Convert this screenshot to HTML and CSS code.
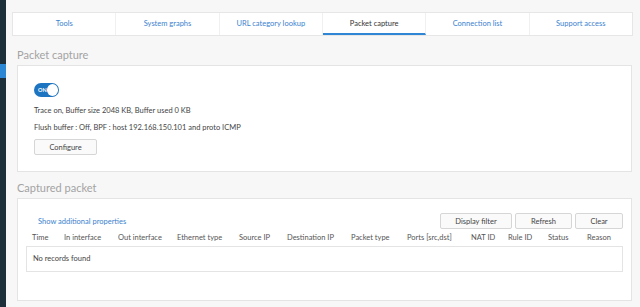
FILE: index.html
```html
<!DOCTYPE html>
<html lang="en">
<head>
    <meta charset="UTF-8" />
    <title>Packet capture</title>
    <link rel="stylesheet" href="styles.css">
</head>
<body>

    <div class="sidebar">
        <div class="sidebar-mark"></div>
    </div>

    <div class="main">
        <div class="tabs">
            <a class="tab">Tools</a>
            <a class="tab">System graphs</a>
            <a class="tab">URL category lookup</a>
            <a class="tab active">Packet capture</a>
            <a class="tab">Connection list</a>
            <a class="tab last">Support access</a>
        </div>

        <div class="section">
            <h2>Packet capture</h2>
            <div class="panel capture">
                <div class="toggle">
                    <span class="toggle-label">ON</span>
                    <span class="toggle-knob"></span>
                </div>
                <p>Trace on, Buffer size 2048 KB, Buffer used 0 KB</p>
                <p>Flush buffer : Off, BPF : host 192.168.150.101 and proto ICMP</p>
                <button class="btn configure">Configure</button>
            </div>
        </div>

        <div class="section second">
            <h2>Captured packet</h2>
            <div class="panel packets">
                <div class="toolbar">
                    <a class="link">Show additional properties</a>
                    <div class="toolbar-buttons">
                        <button class="btn filter">Display filter</button>
                        <button class="btn refresh">Refresh</button>
                        <button class="btn clear">Clear</button>
                    </div>
                </div>
                <div class="columns">
                    <span class="c-time">Time</span>
                    <span class="c-in">In interface</span>
                    <span class="c-out">Out interface</span>
                    <span class="c-eth">Ethernet type</span>
                    <span class="c-src">Source IP</span>
                    <span class="c-dst">Destination IP</span>
                    <span class="c-type">Packet type</span>
                    <span class="c-ports">Ports [src,dst]</span>
                    <span class="c-nat">NAT ID</span>
                    <span class="c-rule">Rule ID</span>
                    <span class="c-status">Status</span>
                    <span class="c-reason">Reason</span>
                </div>
                <div class="empty">No records found</div>
            </div>
        </div>
    </div>

</body>
</html>
```

FILE: styles.css
```css
body {
    font-family: Lato, "Liberation Sans", sans-serif;
    margin: 0;
    padding: 0;
    background-color: #f7f7f7;
    color: #444;
    display: flex;
    min-height: 307px;
    font-size: 7.5px;
}
.sidebar {
    width: 6px;
    background-color: #1c2f3b;
}
.sidebar-mark {
    margin-top: 64px;
    height: 14px;
    background-color: #2b87d3;
}
.main {
    flex: 1;
    padding: 12px 7px 0 6px;
    border-top: 2px solid #fff;
    margin-top: -2px;
}
.tabs {
    display: flex;
    background: #fff;
    border: 1px solid #e6e6e6;
    height: 22px;
}
.tab {
    flex: 1;
    text-align: center;
    line-height: 22px;
    color: #3b82cf;
    border-right: 1px solid #f0f0f0;
    box-sizing: border-box;
}
.tab.last {
    border-right: none;
}
.tab.active {
    color: #333;
    border-bottom: 2px solid #2f86d4;
}
.section {
    margin: 0 1px 0 5px;
}
.section h2 {
    font-size: 11px;
    font-weight: normal;
    color: #a3a3a3;
    margin: 12px 0 4px;
    line-height: 13px;
}
.section.second h2 {
    margin-top: 9px;
}
.panel {
    background: #fff;
    border: 1px solid #e4e4e4;
}
.capture {
    padding: 17px 16px 16px;
}
.capture p {
    margin: 0;
    line-height: 17px;
}
.toggle {
    width: 25px;
    height: 14px;
    border-radius: 7px;
    background: #1d74c0;
    display: flex;
    align-items: center;
    justify-content: space-between;
    padding: 0 1px 0 4px;
    box-sizing: border-box;
    margin-bottom: 5px;
}
.toggle-label {
    color: #fff;
    font-size: 5.5px;
    font-weight: bold;
}
.toggle-knob {
    width: 12px;
    height: 12px;
    border-radius: 50%;
    background: #fff;
}
.btn {
    font-family: inherit;
    font-size: 7.5px;
    color: #444;
    background: #fafafa;
    border: 1px solid #d6d6d6;
    border-radius: 2px;
    height: 16px;
    padding: 0;
}
.configure {
    width: 63px;
    margin-top: 3px;
    display: block;
}
.packets {
    padding: 14px 8px 28px 8px;
}
.toolbar {
    display: flex;
    justify-content: space-between;
    align-items: center;
}
.link {
    color: #3b82cf;
    margin-left: 12px;
}
.toolbar-buttons {
    display: flex;
    gap: 3px;
}
.filter {
    width: 72px;
}
.refresh {
    width: 57px;
}
.clear {
    width: 48px;
}
.columns {
    display: flex;
    height: 17px;
    align-items: center;
    color: #555;
    padding-left: 6px;
}
.columns span {
    white-space: nowrap;
}
.c-time { width: 32px; }
.c-in { width: 54px; }
.c-out { width: 59px; }
.c-eth { width: 62px; }
.c-src { width: 48px; }
.c-dst { width: 64px; }
.c-type { width: 56px; }
.c-ports { width: 64px; }
.c-nat { width: 37px; }
.c-rule { width: 40px; }
.c-status { width: 39px; }
.empty {
    border: 1px solid #e4e4e4;
    height: 24px;
    line-height: 24px;
    padding-left: 6px;
    color: #444;
}
```
